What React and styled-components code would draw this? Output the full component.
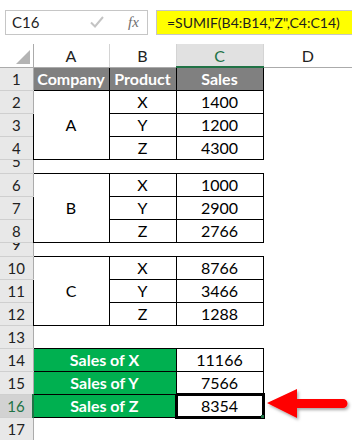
import React from "react";
import styled, { createGlobalStyle } from "styled-components";

const GlobalStyle = createGlobalStyle`
  html, body {
    margin: 0;
    padding: 0;
    background: #fff;
  }
  body {
    font-family: Lato, "Liberation Sans", sans-serif;
  }
`;

const Page = styled.div`
  position: relative;
  width: 352px;
  height: 440px;
  overflow: hidden;
  background: #fff;
`;

const FormulaBar = styled.div`
  display: flex;
  align-items: center;
  height: 44px;
  padding-left: 5px;
  box-sizing: border-box;
`;

const NameBox = styled.div`
  display: flex;
  align-items: center;
  width: 143px;
  height: 25px;
  box-sizing: border-box;
  border: 1px solid #c6c6c6;
  padding-left: 6px;
  background: #fff;
`;

const NameText = styled.span`
  flex: 0 0 78px;
  font-size: 15px;
  color: #1e1e1e;
`;

const Fx = styled.span`
  margin-left: 24px;
  font-family: "Liberation Serif", serif;
  font-style: italic;
  font-size: 15px;
  color: #6f6f6f;
`;

const FormulaInput = styled.div`
  flex: 1;
  display: flex;
  align-items: center;
  height: 25px;
  margin-left: 8px;
  box-sizing: border-box;
  border: 1px solid #c6c6c6;
  border-right: none;
  padding-left: 10px;
  background: #ffff00;
  font-size: 14px;
  color: #1e1e1e;
  white-space: nowrap;
`;

const Sheet = styled.table`
  border-collapse: collapse;
  table-layout: fixed;
  width: 352px;
`;

const Row = styled.tr`
  height: ${(p) => (p.$short ? 14 : 23)}px;
`;

const ColHead = styled.th`
  padding: 0;
  font-weight: 400;
  font-size: 16px;
  color: ${(p) => (p.$active ? "#217346" : "#222")};
  background: ${(p) => (p.$active ? "#e1e1e1" : "#fff")};
  border-left: 1px solid #d4d4d4;
  border-bottom: ${(p) => (p.$active ? "2px solid #217346" : "1px solid #ababab")};
  text-align: center;
  vertical-align: middle;
`;

const Corner = styled.th`
  position: relative;
  padding: 0;
  background: #fff;
  border-right: 1px solid #ababab;
  border-bottom: 1px solid #ababab;
  svg {
    position: absolute;
    right: 3px;
    bottom: 3px;
  }
`;

const RowHead = styled.td`
  padding: 0;
  overflow: hidden;
  background: ${(p) => (p.$active ? "#d2d2d2" : "#e8e8e8")};
  color: ${(p) => (p.$active ? "#217346" : "#222")};
  border-bottom: 1px solid #cfcfcf;
  border-right: ${(p) => (p.$active ? "2px solid #217346" : "1px solid #ababab")};
  font-size: 15px;
  text-align: center;
  vertical-align: top;
`;

const RowNum = styled.div`
  height: ${(p) => (p.$short ? 13 : 22)}px;
  line-height: 22px;
  margin-top: ${(p) => (p.$short ? -10 : 0)}px;
`;

const Cell = styled.td`
  position: relative;
  padding: 0;
  font-size: 16px;
  color: ${(p) => (p.$tone === "plain" ? "#000" : "#fff")};
  font-weight: ${(p) => (p.$tone === "plain" ? 400 : 700)};
  background: ${(p) =>
    p.$tone === "head" ? "#808080" : p.$tone === "green" ? "#00b050" : "#fff"};
  border: ${(p) => (p.$selected ? "3px" : "1px")} solid #000;
  text-align: center;
  vertical-align: middle;
  white-space: nowrap;
`;

const Blank = styled.td`
  padding: 0;
`;

const FillHandle = styled.span`
  position: absolute;
  right: -2px;
  bottom: -2px;
  width: 3px;
  height: 3px;
  background: #217346;
`;

const Arrow = styled.svg`
  position: absolute;
  left: 262px;
  top: 384px;
`;

const groups = [
  { name: "A", rows: [["X", 1400], ["Y", 1200], ["Z", 4300]] },
  { name: "B", rows: [["X", 1000], ["Y", 2900], ["Z", 2766]] },
  { name: "C", rows: [["X", 8766], ["Y", 3466], ["Z", 1288]] },
];

const totals = [
  ["Sales of X", 11166],
  ["Sales of Y", 7566],
  ["Sales of Z", 8354],
];

const Head = ({ n, short, active }) => (
  <RowHead $active={active}>
    <RowNum $short={short}>{n}</RowNum>
  </RowHead>
);

export default function App() {
  let n = 2;
  const body = [];
  groups.forEach((g, gi) => {
    g.rows.forEach(([prod, val], i) => {
      body.push(
        <Row key={n}>
          <Head n={n} />
          {i === 0 && (
            <Cell $tone="plain" rowSpan={3}>
              {g.name}
            </Cell>
          )}
          <Cell $tone="plain">{prod}</Cell>
          <Cell $tone="plain">{val}</Cell>
          <Blank />
        </Row>
      );
      n++;
    });
    // short spacer row between company groups
    if (gi < groups.length - 1) {
      body.push(
        <Row key={n} $short>
          <Head n={n} short />
          <Blank colSpan={4} />
        </Row>
      );
      n++;
    }
  });
  body.push(
    <Row key={n}>
      <Head n={n} />
      <Blank colSpan={4} />
    </Row>
  );
  n++;
  totals.forEach(([label, val], i) => {
    const sel = i === totals.length - 1;
    body.push(
      <Row key={n}>
        <Head n={n} active={sel} />
        <Cell $tone="green" colSpan={2}>
          {label}
        </Cell>
        <Cell $tone="plain" $selected={sel}>
          {val}
          {sel && <FillHandle />}
        </Cell>
        <Blank />
      </Row>
    );
    n++;
  });
  body.push(
    <Row key={n}>
      <Head n={n} />
      <Blank colSpan={4} />
    </Row>
  );

  return (
    <Page>
      <GlobalStyle />
      <FormulaBar>
        <NameBox>
          <NameText>C16</NameText>
          <svg width="14" height="12" viewBox="0 0 14 12">
            <path d="M1 6.5 L5 10.5 L13 1" fill="none" stroke="#c4c4c4" strokeWidth="2" />
          </svg>
          <Fx>fx</Fx>
        </NameBox>
        <FormulaInput>=SUMIF(B4:B14,"Z",C4:C14)</FormulaInput>
      </FormulaBar>
      <Sheet>
        <colgroup>
          <col style={{ width: 33 }} />
          <col style={{ width: 76 }} />
          <col style={{ width: 67 }} />
          <col style={{ width: 87 }} />
          <col style={{ width: 89 }} />
        </colgroup>
        <thead>
          <Row>
            <Corner>
              <svg width="14" height="14" viewBox="0 0 14 14">
                <path d="M14 0 L14 14 L0 14 Z" fill="#b4b4b4" />
              </svg>
            </Corner>
            <ColHead>A</ColHead>
            <ColHead>B</ColHead>
            <ColHead $active>C</ColHead>
            <ColHead>D</ColHead>
          </Row>
        </thead>
        <tbody>
          <Row>
            <Head n={1} />
            <Cell $tone="head">Company</Cell>
            <Cell $tone="head">Product</Cell>
            <Cell $tone="head">Sales</Cell>
            <Blank />
          </Row>
          {body}
        </tbody>
      </Sheet>
      <Arrow width="90" height="40" viewBox="0 0 90 40">
        <defs>
          <filter id="shadow" x="-10%" y="-20%" width="130%" height="160%">
            <feDropShadow dx="1.5" dy="2" stdDeviation="1.5" floodColor="#000" floodOpacity="0.35" />
          </filter>
        </defs>
        <path
          d="M5 19 L35 5 L35 15 L81 15 A4.5 4.5 0 0 1 81 24 L35 24 L35 34 Z"
          fill="#ff0000"
          filter="url(#shadow)"
        />
      </Arrow>
    </Page>
  );
}
